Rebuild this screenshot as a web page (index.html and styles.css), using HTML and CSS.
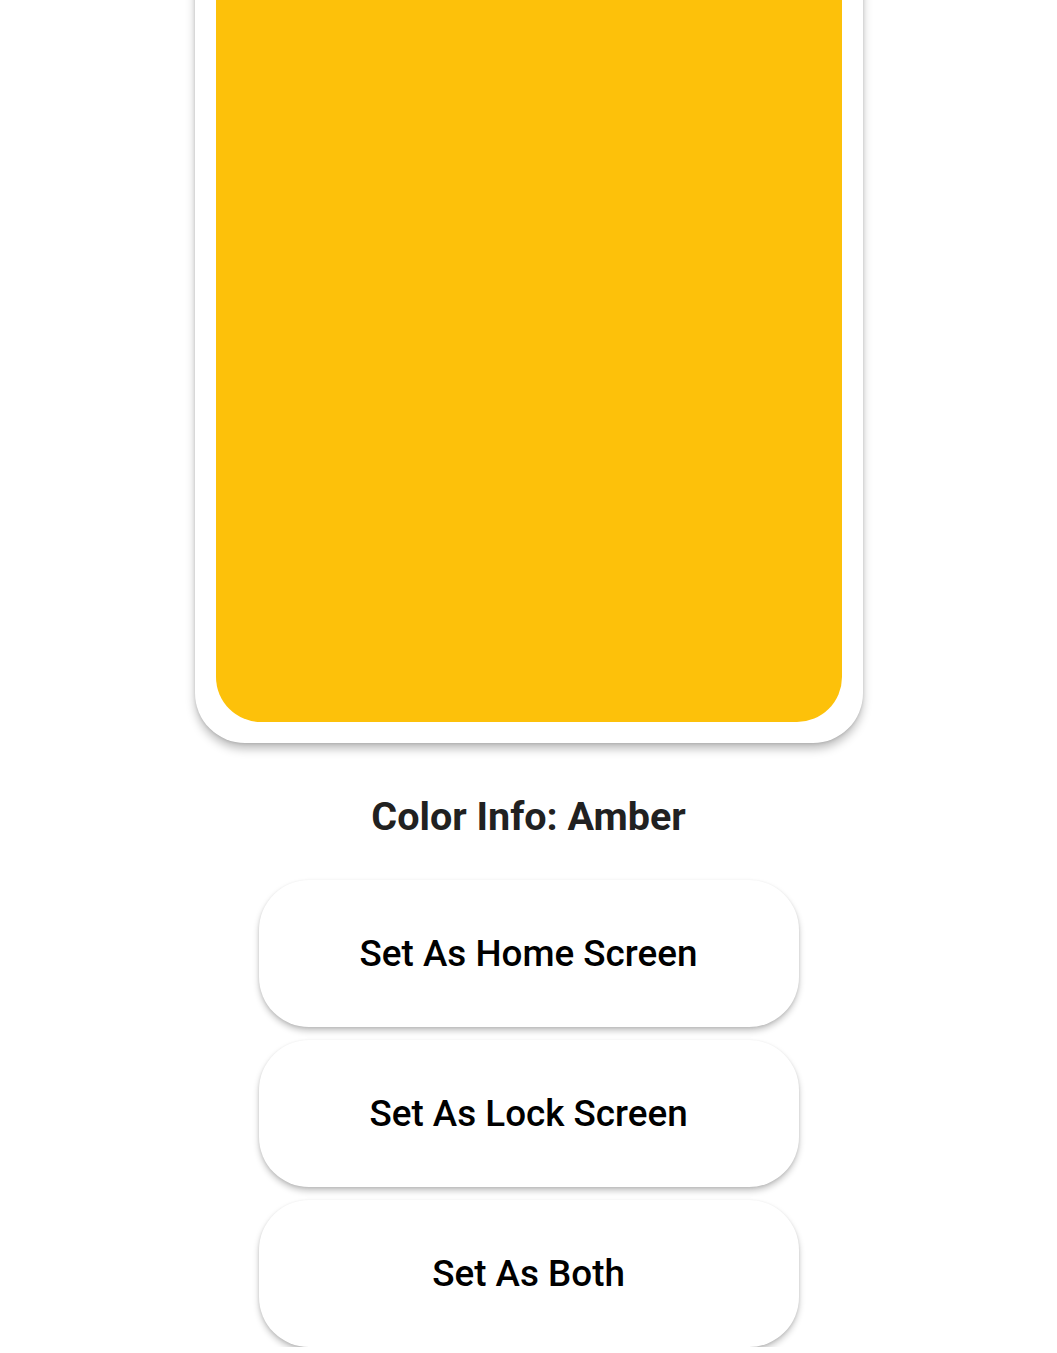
FILE: index.html
```html
<!DOCTYPE html>
<html>
<head>
<meta charset="utf-8">
<link rel="stylesheet" href="styles.css">
</head>
<body>
<main class="page">
  <div class="frame">
    <div class="swatch"></div>
  </div>
  <h1 class="title">Color Info: Amber</h1>
  <div class="actions">
    <button class="btn">Set As Home Screen</button>
    <button class="btn">Set As Lock Screen</button>
    <button class="btn">Set As Both</button>
  </div>
</main>
</body>
</html>
```
FILE: styles.css
```css
html, body {
  margin: 0;
  padding: 0;
  background: #ffffff;
  overflow: hidden;
}
.page {
  display: flex;
  flex-direction: column;
  align-items: center;
  font-family: Roboto, "Noto Sans", sans-serif;
}
.frame {
  margin-top: -200px;
  width: 626px;
  height: 901px;
  padding: 21px;
  background: #ffffff;
  border-radius: 50px;
  box-shadow: 0 6px 10px rgba(0,0,0,0.25), 0 1px 3px rgba(0,0,0,0.12);
  display: flex;
}
.swatch {
  flex: 1;
  background: #fdc10a;
  border-radius: 45px;
}
.title {
  margin: 50px 0 0;
  height: 48px;
  line-height: 48px;
  font-size: 39.5px;
  font-weight: 700;
  color: #212121;
}
.actions {
  margin-top: 39px;
  display: flex;
  flex-direction: column;
  gap: 13px;
}
.btn {
  width: 540px;
  height: 147px;
  border: none;
  border-radius: 50px;
  background: #ffffff;
  font-family: Roboto, "Noto Sans", sans-serif;
  font-size: 36.8px;
  font-weight: 500;
  color: #000000;
  box-shadow: 0 4px 6px rgba(0,0,0,0.22), 0 1px 3px rgba(0,0,0,0.10);
}
```
